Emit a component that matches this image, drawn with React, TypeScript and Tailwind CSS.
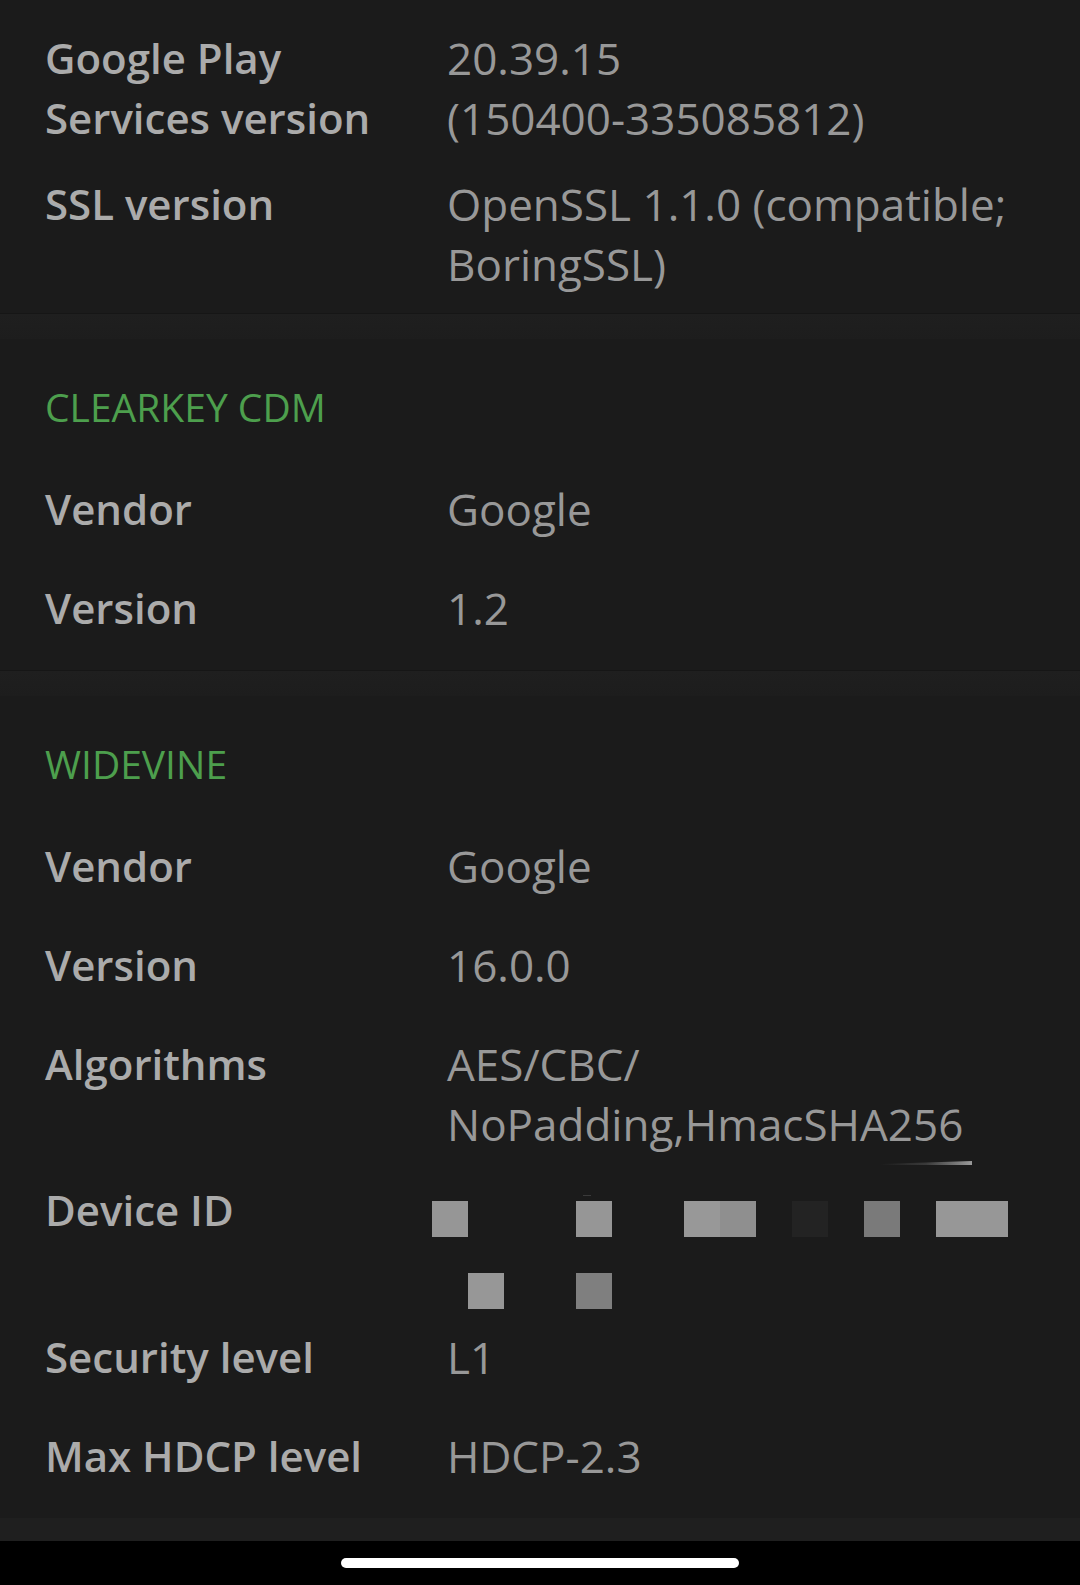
const rows1 = [
  { label: ["Google Play", "Services version"], value: ["20.39.15", "(150400-335085812)"] },
  { label: ["SSL version"], value: ["OpenSSL 1.1.0 (compatible;", "BoringSSL)"] },
];

const clearkey = [
  { label: ["Vendor"], value: ["Google"] },
  { label: ["Version"], value: ["1.2"] },
];

// pixelated device id, 36px cells starting at the value column
const idBlocks: { x: number; y: number; w: number; c: string }[] = [
  { x: 0, y: 0, w: 1, c: "#969696" },
  { x: 4, y: 0, w: 1, c: "#969696" },
  { x: 7, y: 0, w: 1, c: "#989898" },
  { x: 8, y: 0, w: 1, c: "#8f8f8f" },
  { x: 10, y: 0, w: 1, c: "#232323" },
  { x: 12, y: 0, w: 1, c: "#7a7a7a" },
  { x: 14, y: 0, w: 2, c: "#979797" },
  { x: 1, y: 2, w: 1, c: "#979797" },
  { x: 4, y: 2, w: 1, c: "#7f7f7f" },
];

const Row = ({ label, value }: { label: string[]; value: string[] }) => (
  <div className="flex min-h-[99px] py-[13px] leading-[60px]">
    <div className="w-[447px] shrink-0 pl-[45px] text-[42px] font-semibold text-[#ababab]">
      {label.map((l) => (
        <div key={l}>{l}</div>
      ))}
    </div>
    <div className="text-[44px] text-[#989898]">
      {value.map((v) => (
        <div key={v}>{v}</div>
      ))}
    </div>
  </div>
);

const Divider = () => (
  <div className="flex flex-col">
    <div className="h-px bg-[#161616]" />
    <div className="h-[25px] bg-gradient-to-b from-[#1f1f1f] to-[#1d1d1d]" />
  </div>
);

const Header = ({ title }: { title: string }) => (
  <div className="pl-[45px] pt-[42px] pb-[33px] text-[39px] leading-[52px] text-[#4d9f4d]">
    {title}
  </div>
);

const DeviceId = () => (
  <div className="flex py-[13px] leading-[60px]">
    <div className="w-[447px] shrink-0 pl-[45px] text-[42px] font-semibold text-[#ababab]">
      Device ID
    </div>
    <div className="relative h-[121px] flex-1">
      <div className="absolute left-[433px] top-[-19px] h-[4px] w-[92px] bg-gradient-to-r from-transparent via-[#3a3a3a] to-[#9a9a9a] [clip-path:polygon(0_75%,100%_0,100%_100%,0_100%)]" />
      <div className="absolute left-[136px] top-[15px] h-px w-[8px] bg-[#3a3a3a]" />
      <div className="mt-[21px] -ml-[15px] grid grid-cols-[repeat(16,36px)] grid-rows-[repeat(3,36px)]">
        {idBlocks.map((b, i) => (
          <div
            key={i}
            className={b.w === 2 ? "col-span-2" : ""}
            style={{
              gridColumnStart: b.x + 1,
              gridRowStart: b.y + 1,
              backgroundColor: b.c,
            }}
          />
        ))}
      </div>
    </div>
  </div>
);

export default function App() {
  return (
    <div className="flex min-h-[1585px] w-[1080px] flex-col bg-[#1b1b1b] font-['Open_Sans',sans-serif]">
      <div className="pt-[15px] pb-[6px]">
        {rows1.map((r) => (
          <Row key={r.label[0]} label={r.label} value={r.value} />
        ))}
      </div>
      <Divider />
      <div className="pb-[6px]">
        <Header title="CLEARKEY CDM" />
        {clearkey.map((r) => (
          <Row key={r.label[0]} label={r.label} value={r.value} />
        ))}
      </div>
      <Divider />
      <div className="pb-[6px]">
        <Header title="WIDEVINE" />
        <Row label={["Vendor"]} value={["Google"]} />
        <Row label={["Version"]} value={["16.0.0"]} />
        <Row label={["Algorithms"]} value={["AES/CBC/", "NoPadding,HmacSHA256"]} />
        <DeviceId />
        <Row label={["Security level"]} value={["L1"]} />
        <Row label={["Max HDCP level"]} value={["HDCP-2.3"]} />
      </div>
      <div className="h-[23px] bg-[#1f1f1f]" />
      <div className="flex flex-1 items-start justify-center bg-black pt-[17px]">
        <div className="h-[10px] w-[398px] rounded-full bg-white" />
      </div>
    </div>
  );
}
